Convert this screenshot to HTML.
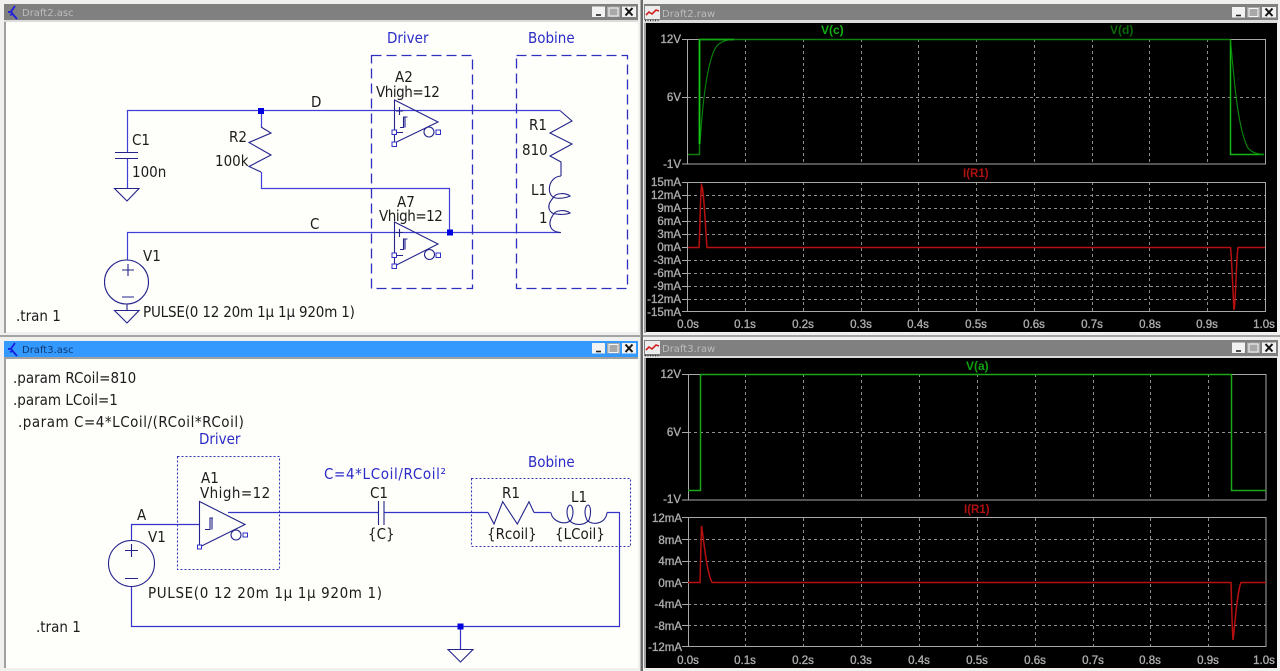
<!DOCTYPE html>
<html><head><meta charset="utf-8"><title>LTspice</title>
<style>
html,body{margin:0;padding:0;background:#f0f0ee;width:1280px;height:671px;overflow:hidden}
svg{display:block;filter:blur(.35px)}
.t,.b{font:15px "DejaVu Sans","Liberation Sans",sans-serif;transform-box:fill-box;transform-origin:0 50%;transform:scaleX(.9)}
.t{fill:#1c1c1c}
.b{fill:#2c2cc8}
.tt{font:10px "DejaVu Sans","Liberation Sans",sans-serif;fill:#bcbcbc}
.a{font:11.5px "Liberation Sans","DejaVu Sans",sans-serif;fill:#acacac;stroke:#acacac;stroke-width:.35}
.e{text-anchor:end}.m{text-anchor:middle}
</style></head><body>
<svg width="1280" height="671" viewBox="0 0 1280 671" xmlns="http://www.w3.org/2000/svg">
<defs>
<g id="btn">
<rect x="0" y="0" width="13" height="10.500" fill="#f2f2f2"/><path d="M4 8.500h5" stroke="#222" stroke-width="1.600"/>
<rect x="15" y="0" width="13" height="10.500" fill="#a8a8a8"/><rect x="17" y="1.500" width="9" height="8" fill="none" stroke="#f6f6f6" stroke-width="1"/>
<rect x="30" y="0" width="14" height="10.500" fill="#f2f2f2"/><path d="M33.500 1.500l7 7.500M40.500 1.500l-7 7.500" stroke="#111" stroke-width="2"/>
</g>
<path id="sicon" d="M7 1L3 6.500l2 3L9 14M3.500 7H0M5 9l-3 1" fill="none" stroke="#1a1ae0" stroke-width="1.700"/>
<g id="ricon">
<rect x="0" y="0" width="15" height="13" fill="#ececec"/><path d="M1 9l3-3 3 2 4-4 3 1" fill="none" stroke="#d02020" stroke-width="1.600"/>
<path d="M0 14.500h15" stroke="#333" stroke-width="1.500" stroke-dasharray="1 1.500"/>
</g>
</defs>

<!-- chrome -->
<rect width="1280" height="671" fill="#f0f0ee"/>
<rect x="4" y="4" width="634" height="16" fill="#808080"/>
<rect x="4" y="20" width="634" height="2" fill="#dcdcdc"/>
<rect x="4" y="22" width="2" height="311" fill="#a0a0a0"/>
<rect x="6" y="22" width="632" height="310" fill="#fefefa"/>
<rect x="0" y="335" width="640" height="2" fill="#a4a4a4"/>
<rect x="4" y="341" width="634" height="16" fill="#3399ff"/>
<rect x="4" y="357" width="634" height="2" fill="#a0a0a0"/>
<rect x="4" y="359" width="2" height="309" fill="#a0a0a0"/>
<rect x="6" y="359" width="632" height="309" fill="#fefefa"/>
<rect x="640.500" y="0" width="2.500" height="671" fill="#6a6a6a"/>
<rect x="644" y="4" width="634" height="16" fill="#808080"/>
<rect x="644" y="20" width="634" height="3" fill="#dcdcdc"/>
<rect x="644" y="23" width="2" height="310" fill="#a0a0a0"/>
<rect x="646" y="23" width="631" height="309" fill="#000"/>
<rect x="643" y="335" width="637" height="2" fill="#a4a4a4"/>
<rect x="644" y="340" width="634" height="16" fill="#808080"/>
<rect x="644" y="356" width="634" height="2" fill="#dcdcdc"/>
<rect x="644" y="358" width="2" height="310" fill="#a0a0a0"/>
<rect x="646" y="358" width="631" height="310" fill="#000"/>

<use href="#btn" x="592" y="6.500"/><use href="#btn" x="592" y="343"/>
<use href="#btn" x="1232" y="7"/><use href="#btn" x="1232" y="342.500"/>
<use href="#sicon" x="8" y="5"/><use href="#sicon" x="8" y="342"/>
<use href="#ricon" x="645" y="6"/><use href="#ricon" x="645" y="341"/>
<text class="tt" x="22" y="16">Draft2.asc</text>
<text class="tt" x="22" y="353" style="fill:#123a70">Draft3.asc</text>
<text class="tt" x="662" y="17">Draft2.raw</text>
<text class="tt" x="662" y="352">Draft3.raw</text>

<!-- schematic 1 wires -->
<g fill="none" stroke="#4040d8" stroke-width="1.200">
<path d="M127.500 153V110.500H560.500M127.500 158V188M261.500 111V127M261.500 172V188.500H449.500V232.500M127.500 260V232.500H560.500"/>
</g>
<g fill="none" stroke="#24248c" stroke-width="1.100">
<path d="M115 152.500H138M115 158.500H138M114.500 188.500H139L127 201Z"/>
<path d="M261 127L271 133L249 142.500L271 155L249 166.500L261 172"/>
<path d="M560.500 111L572 121L550 133L572 144L550 156L561 162V176"/>
<path d="M561 176C547 177 546 197 556 198C562 199 568 197 570 196C566 193 556 192 553 198C545 207 550 214 556 214C562 215 568 214 570 213C566 210 556 209 553 215C547 224 550 232 561 232.500"/>
<circle cx="126.500" cy="282" r="22"/>
<path d="M122 270H134M128 264V276M122 297H134M127 304V310M114.500 310.500H139L127 323Z"/>
<path d="M394.500 100L438 122L394.500 143ZM394.500 222L438 244L394.500 266Z"/>
<circle cx="429" cy="132" r="5"/><circle cx="429.500" cy="254.500" r="5"/>
<path d="M396 111H403M399.500 107V115M396 132.500H403M396 232.500H403M399.500 229V237M396 255.500H403"/>
<path d="M400 127.500H403.500V117H407.500M405 117V127.500M400 249.500H403.500V239H407.500M405 239V249.500"/>
</g>
<g fill="#fefefa" stroke="#3030c8" stroke-width="1">
<rect x="392" y="130" width="4.500" height="4.500"/><rect x="392" y="142" width="4.500" height="4.500"/><rect x="436" y="130" width="4.500" height="4.500"/>
<rect x="392" y="253" width="4.500" height="4.500"/><rect x="392" y="264" width="4.500" height="4.500"/><rect x="436" y="253" width="4.500" height="4.500"/>
</g>
<rect x="258" y="108" width="6" height="6" fill="#0000e0"/><rect x="447" y="229.500" width="6" height="6" fill="#0000e0"/>
<g fill="none" stroke="#3030c0" stroke-width="1.300" stroke-dasharray="10 5">
<rect x="371.500" y="55.500" width="101" height="233"/>
<rect x="516.500" y="55.500" width="111" height="233"/>
</g>
<text class="b" x="387" y="43">Driver</text><text class="b" x="528" y="43">Bobine</text>
<text class="t" x="311" y="107">D</text><text class="t" x="310" y="229">C</text>
<text class="t" x="132" y="145">C1</text><text class="t" x="132" y="177">100n</text>
<text class="t" x="229" y="142">R2</text><text class="t" x="215" y="166">100k</text>
<text class="t" x="395" y="82">A2</text><text class="t" x="376" y="97" textLength="71">Vhigh=12</text>
<text class="t" x="397" y="207">A7</text><text class="t" x="379" y="221" textLength="71">Vhigh=12</text>
<text class="t" x="529" y="130">R1</text><text class="t" x="522" y="155">810</text>
<text class="t" x="531" y="195">L1</text><text class="t" x="539" y="223">1</text>
<text class="t" x="143" y="261">V1</text><text class="t" x="143" y="317" textLength="235.500">PULSE(0 12 20m 1µ 1µ 920m 1)</text>
<text class="t" x="16" y="321">.tran 1</text>

<!-- schematic 2 -->
<g fill="none" stroke="#3434c8" stroke-width="1.200">
<path d="M131.500 540V524.500H199.500M228 512.500H378M384 512.500H488M534 512.500H550.500M607 512.500H619.500V626.500H131.500V586M460.500 626.500V649"/>
</g>
<g fill="none" stroke="#24248c" stroke-width="1.100">
<circle cx="131.500" cy="563.500" r="23"/>
<path d="M125 550.500H138M131.500 544V557M125 578.500H138"/>
<path d="M199.500 501.500L245 524.500L199.500 547Z"/>
<circle cx="236" cy="535" r="5"/>
<path d="M205 529.500H210V518H213M212 518V529.500"/>
<path d="M378.500 501V525M384 501V525"/>
<path d="M488 512.500L494 524L502.700 501.700L517.300 524L529 501.700L534 512.500"/>
<path d="M551 512.500C552 522 566 526 571 520C575 512 572 505 570 505C568 505 565 512 569 520C574 526 584 526 589 520C592 512 590 505 588 505C586 505 583 512 587 520C592 526 606 524 607 512.500"/>
<path d="M448 649.500H473L460.500 662Z"/>
</g>
<g fill="#fefefa" stroke="#3030c8"><rect x="197.500" y="545" width="4" height="4"/><rect x="243" y="533" width="4.500" height="4"/></g>
<rect x="457.500" y="623.500" width="6" height="6" fill="#0000e0"/>
<g fill="none" stroke="#3434b8" stroke-width="1.100" stroke-dasharray="2 2">
<rect x="177.500" y="456.500" width="102" height="113"/>
<rect x="471.500" y="478.500" width="159" height="68"/>
</g>
<text class="t" x="13" y="383">.param RCoil=810</text>
<text class="t" x="13" y="405">.param LCoil=1</text>
<text class="t" x="18" y="427" textLength="251">.param C=4*LCoil/(RCoil*RCoil)</text>
<text class="b" x="199" y="444">Driver</text>
<text class="t" x="201" y="483">A1</text><text class="t" x="200" y="498" textLength="78">Vhigh=12</text>
<text class="t" x="137" y="520">A</text><text class="t" x="148" y="542">V1</text>
<text class="b" x="324" y="479" textLength="135.500">C=4*LCoil/RCoil²</text>
<text class="b" x="528" y="467">Bobine</text>
<text class="t" x="370" y="498">C1</text><text class="t" x="368" y="539">{C}</text>
<text class="t" x="502" y="498">R1</text><text class="t" x="487" y="539">{Rcoil}</text>
<text class="t" x="571" y="502">L1</text><text class="t" x="555" y="539">{LCoil}</text>
<text class="t" x="148" y="598" textLength="260">PULSE(0 12 20m 1µ 1µ 920m 1)</text>
<text class="t" x="36" y="632">.tran 1</text>

<!-- plot 1 -->
<g fill="none" stroke="#8e8e8e" stroke-width="1" stroke-dasharray="3 3">
<path d="M745.500 39V164M803.500 39V164M861.500 39V164M918.500 39V164M976.500 39V164M1034.500 39V164M1092.500 39V164M1149.500 39V164M1207.500 39V164M688 97.500H1265"/>
<path d="M745.500 182V311M803.500 182V311M861.500 182V311M918.500 182V311M976.500 182V311M1034.500 182V311M1092.500 182V311M1149.500 182V311M1207.500 182V311M688 195.500H1265M688 208.500H1265M688 221.500H1265M688 234.500H1265M688 260.500H1265M688 273.500H1265M688 286.500H1265M688 299.500H1265"/>
</g>
<g fill="none" stroke="#a8a8a8" stroke-width="1">
<rect x="687.500" y="39.500" width="578" height="124.500"/><rect x="687.500" y="182.500" width="578" height="129"/>
<path d="M682 39.500H688M682 97.500H688M682 164H688M682 182.500H688M682 195.500H688M682 208.500H688M682 221.500H688M682 234.500H688M682 247.500H688M682 260.500H688M682 273.500H688M682 286.500H688M682 299.500H688M682 311.500H688"/>
</g>
<path d="M700 144C703 95 708 60 716 47C721 41 727 39.500 734 39.500" fill="none" stroke="#0a8a0a" stroke-width="1.100"/>
<path d="M688 154.500H699.500V39.500H1230" fill="none" stroke="#0f7f0f" stroke-width="1.500"/>
<path d="M699.500 144V39.500" stroke="#18c818" stroke-width="1.700"/>
<path d="M699.500 39.500H734" stroke="#14a814" stroke-width="1.800"/>
<path d="M1230.500 39.500V154.500H1264" fill="none" stroke="#14b814" stroke-width="1.500"/>
<path d="M1230.500 39.500C1234 80 1238 130 1248 148C1252 153 1258 154 1264 154.500" fill="none" stroke="#0a8a0a" stroke-width="1.100"/>
<path d="M688 247.500H699C700 232 700 205 701.500 185C704 190 705 222 707 247.500H1230.500C1232 262 1233 295 1234 310C1236 300 1236 262 1238 247.500H1265" fill="none" stroke="#b81010" stroke-width="1.500"/>
<text x="821" y="34" font-family="Liberation Sans,sans-serif" font-size="12" font-weight="bold" fill="#10b010">V(c)</text>
<text x="1110" y="34" font-family="Liberation Sans,sans-serif" font-size="12" font-weight="bold" fill="#0a6a0a">V(d)</text>
<text x="963" y="177" font-family="Liberation Sans,sans-serif" font-size="11.500" font-weight="bold" fill="#b01010">I(R1)</text>
<g class="a">
<text class="a e" x="681" y="43">12V</text><text class="a e" x="681" y="101">6V</text><text class="a e" x="681" y="168">-1V</text>
<text class="a e" x="681" y="186">15mA</text><text class="a e" x="681" y="199">12mA</text><text class="a e" x="681" y="212">9mA</text><text class="a e" x="681" y="225">6mA</text><text class="a e" x="681" y="238">3mA</text><text class="a e" x="681" y="251">0mA</text><text class="a e" x="681" y="264">-3mA</text><text class="a e" x="681" y="277">-6mA</text><text class="a e" x="681" y="290">-9mA</text><text class="a e" x="681" y="303">-12mA</text><text class="a e" x="681" y="316">-15mA</text>
<text class="a m" x="688" y="328">0.0s</text><text class="a m" x="745" y="328">0.1s</text><text class="a m" x="803" y="328">0.2s</text><text class="a m" x="861" y="328">0.3s</text><text class="a m" x="918" y="328">0.4s</text><text class="a m" x="976" y="328">0.5s</text><text class="a m" x="1034" y="328">0.6s</text><text class="a m" x="1092" y="328">0.7s</text><text class="a m" x="1150" y="328">0.8s</text><text class="a m" x="1207" y="328">0.9s</text><text class="a m" x="1264" y="328">1.0s</text>
</g>

<!-- plot 2 -->
<g fill="none" stroke="#8e8e8e" stroke-width="1" stroke-dasharray="3 3">
<path d="M745.500 374V500M803.500 374V500M861.500 374V500M919.500 374V500M977.500 374V500M1035.500 374V500M1093.500 374V500M1150.500 374V500M1208.500 374V500M688 432.500H1266"/>
<path d="M745.500 518V647M803.500 518V647M861.500 518V647M919.500 518V647M977.500 518V647M1035.500 518V647M1093.500 518V647M1150.500 518V647M1208.500 518V647M688 539.500H1266M688 561.500H1266M688 604.500H1266M688 625.500H1266"/>
</g>
<g fill="none" stroke="#a8a8a8" stroke-width="1">
<rect x="688.500" y="374.500" width="577.500" height="125.500"/><rect x="688.500" y="517.500" width="577.500" height="129"/>
<path d="M682 374.500H688M682 432.500H688M682 500H688M682 517.500H688M682 539.500H688M682 561.500H688M682 582.500H688M682 604.500H688M682 625.500H688M682 646.500H688"/>
</g>
<path d="M688 490.500H700.500V374.500H1231.500V490.500H1266" fill="none" stroke="#1aa81a" stroke-width="1.500"/>
<path d="M688 582.500H700C700.500 565 701 540 701.500 526C704 540 706 570 712 582.500H1231C1231.500 600 1232 625 1233 640C1235 625 1237 592 1241 582.500H1266" fill="none" stroke="#b81010" stroke-width="1.500"/>
<text x="966" y="370" font-family="Liberation Sans,sans-serif" font-size="12" font-weight="bold" fill="#10a010">V(a)</text>
<text x="964" y="513" font-family="Liberation Sans,sans-serif" font-size="11.500" font-weight="bold" fill="#b01010">I(R1)</text>
<g class="a">
<text class="a e" x="681" y="378">12V</text><text class="a e" x="681" y="436">6V</text><text class="a e" x="681" y="503">-1V</text>
<text class="a e" x="682" y="522">12mA</text><text class="a e" x="682" y="544">8mA</text><text class="a e" x="682" y="565">4mA</text><text class="a e" x="682" y="587">0mA</text><text class="a e" x="682" y="608">-4mA</text><text class="a e" x="682" y="630">-8mA</text><text class="a e" x="682" y="651">-12mA</text>
<text class="a m" x="688" y="664">0.0s</text><text class="a m" x="745" y="664">0.1s</text><text class="a m" x="803" y="664">0.2s</text><text class="a m" x="861" y="664">0.3s</text><text class="a m" x="919" y="664">0.4s</text><text class="a m" x="977" y="664">0.5s</text><text class="a m" x="1035" y="664">0.6s</text><text class="a m" x="1093" y="664">0.7s</text><text class="a m" x="1150" y="664">0.8s</text><text class="a m" x="1208" y="664">0.9s</text><text class="a m" x="1264" y="664">1.0s</text>
</g>
</svg>
</body></html>
